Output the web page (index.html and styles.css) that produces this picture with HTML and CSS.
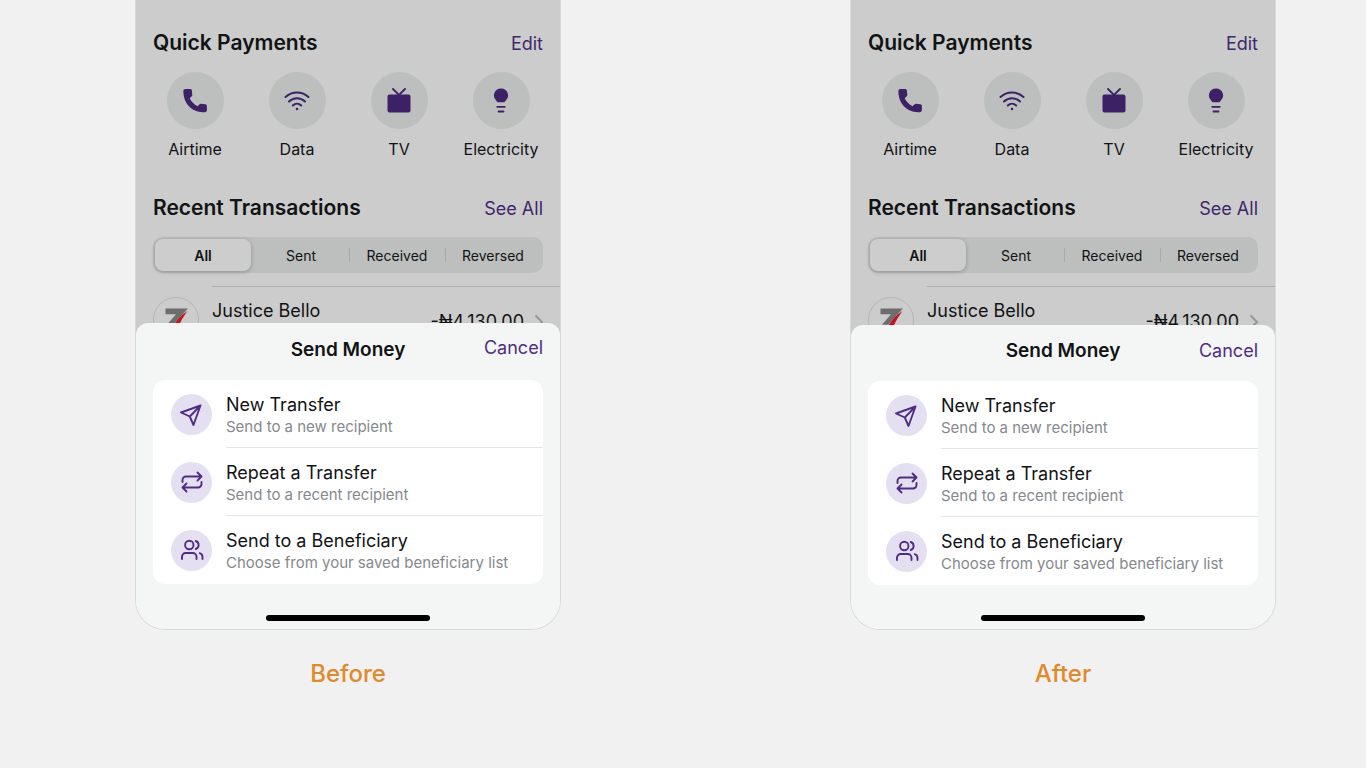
FILE: index.html
```
<!DOCTYPE html>
<html lang="en">
<head>
  <meta charset="UTF-8">
  <meta name="viewport" content="width=device-width, initial-scale=1">
  <title>Send Money - Before / After</title>
  <link rel="stylesheet" href="styles.css">
</head>
<body>
  <!-- shared icons -->
  <svg class="sprite" aria-hidden="true">
    <symbol id="phone" viewBox="0 0 24 24">
      <path fill="currentColor" d="M2.500 0h4.500c1.200 0 1.800.7 1.900 1.700l.4 4c.1.800-.2 1.400-.8 1.900L6.700 9.200c1.600 3.300 4.300 6.300 7.900 8l1.700-1.800c.5-.5 1.200-.8 1.900-.7l4 .5c1.100.1 1.700.8 1.700 1.900v4c0 1.300-.8 2-2.100 2.100C9.500 24.300 0 14.300.4 2.100.4.900 1.200 0 2.500 0z"/>
    </symbol>
    <symbol id="wifi" viewBox="0 0 26 22">
      <g fill="none" stroke="currentColor" stroke-width="2" stroke-linecap="round">
        <path d="M1.500 7C8 1 18 1 24.500 7M5 11.500c4.600-4.500 11.400-4.500 16 0M8.800 15.500c2.500-2.400 5.900-2.400 8.400 0"/>
      </g>
      <circle cx="13" cy="19" r="1.300" fill="currentColor"/>
    </symbol>
    <symbol id="tv" viewBox="0 0 24 26">
      <rect x="0.500" y="6.500" width="23" height="18" rx="2" fill="currentColor"/>
      <path d="M6 1l6 6 6-6" fill="none" stroke="currentColor" stroke-width="1.800" stroke-linecap="round"/>
    </symbol>
    <symbol id="bulb" viewBox="0 0 16 26">
      <path fill="currentColor" d="M8 .5a7 7 0 0 1 4.500 12.400c-.6.500-.9 1-1 1.400h-7c-.1-.4-.4-.9-1-1.400A7 7 0 0 1 8 .5z"/>
      <path d="M4.200 18.800h7.600M5.500 23.500h5" stroke="currentColor" stroke-width="1.800" stroke-linecap="round"/>
    </symbol>
    <symbol id="plane" viewBox="0 0 24 24">
      <path d="M20.500 3.500L1 10.500l8.800 4L13.500 23zM20.500 3.500L9.800 14.500" fill="none" stroke="currentColor" stroke-width="1.900" stroke-linejoin="round"/>
    </symbol>
    <symbol id="repeat" viewBox="0 0 24 24">
      <path d="M17.500 2.500L21.500 6.500l-4 4M2.500 12v-2A3.500 3.500 0 0 1 6 6.500h15.500M6.500 21.500l-4-4 4-4M21.500 12v2a3.500 3.500 0 0 1-3.500 3.500H2.500" fill="none" stroke="currentColor" stroke-width="1.900" stroke-linecap="round" stroke-linejoin="round"/>
    </symbol>
    <symbol id="users" viewBox="0 0 24 24">
      <path d="M16.500 21v-2.300a3.700 3.700 0 0 0-3.700-3.700H5.700A3.700 3.700 0 0 0 2 18.700V21M22.500 21v-2.300a3.900 3.900 0 0 0-2.800-3.600M15.700 3a4.200 4.200 0 0 1 0 8" fill="none" stroke="currentColor" stroke-width="1.900" stroke-linecap="round"/>
      <circle cx="9.300" cy="7" r="4.200" fill="none" stroke="currentColor" stroke-width="1.900"/>
    </symbol>
    <symbol id="zenith" viewBox="0 0 46 46">
      <path fill="#6d6d6d" d="M12 11h23.500L20 28h-6.500l9.500-11H12z"/>
      <path fill="#c4161c" d="M35 13.500C28 18 24 23 18.500 31H25c3-7 6-12 10-17.500z"/>
    </symbol>
  </svg>

  <main class="comparison">
    <figure class="version before">
      <div class="phone">
        <section class="app">
          <header class="section-head">
            <h2>Quick Payments</h2>
            <button class="link">Edit</button>
          </header>
          <div class="payments">
            <button class="payment"><span class="payment-icon"><svg width="24" height="24"><use href="#phone"/></svg></span>Airtime</button>
            <button class="payment"><span class="payment-icon"><svg width="26" height="22"><use href="#wifi"/></svg></span>Data</button>
            <button class="payment"><span class="payment-icon"><svg width="24" height="26"><use href="#tv"/></svg></span>TV</button>
            <button class="payment"><span class="payment-icon"><svg width="16" height="26"><use href="#bulb"/></svg></span>Electricity</button>
          </div>
          <header class="section-head">
            <h2>Recent Transactions</h2>
            <button class="link">See All</button>
          </header>
          <div class="tabs">
            <button class="tab active">All</button>
            <button class="tab">Sent</button>
            <button class="tab">Received</button>
            <button class="tab">Reversed</button>
          </div>
          <div class="transaction">
            <svg class="bank"><use href="#zenith"/></svg>
            <div class="transaction-body">
              <span class="name">Justice Bello</span>
              <span class="amount">-₦4,130.00</span>
              <svg class="chevron" width="10" height="16" viewBox="0 0 10 16"><path d="M1.500 1.500L8 8l-6.500 6.500"/></svg>
            </div>
          </div>
        </section>
        <section class="sheet">
          <header class="sheet-head">
            <h3>Send Money</h3>
            <button class="link">Cancel</button>
          </header>
          <div class="options">
            <button class="option">
              <span class="option-icon"><svg><use href="#plane"/></svg></span>
              <span class="option-text"><b>New Transfer</b><small>Send to a new recipient</small></span>
            </button>
            <button class="option">
              <span class="option-icon"><svg><use href="#repeat"/></svg></span>
              <span class="option-text"><b>Repeat a Transfer</b><small>Send to a recent recipient</small></span>
            </button>
            <button class="option">
              <span class="option-icon"><svg><use href="#users"/></svg></span>
              <span class="option-text"><b>Send to a Beneficiary</b><small>Choose from your saved beneficiary list</small></span>
            </button>
          </div>
          <div class="home-bar"></div>
        </section>
      </div>
      <figcaption>Before</figcaption>
    </figure>

    <figure class="version after">
      <div class="phone">
        <section class="app">
          <header class="section-head">
            <h2>Quick Payments</h2>
            <button class="link">Edit</button>
          </header>
          <div class="payments">
            <button class="payment"><span class="payment-icon"><svg width="24" height="24"><use href="#phone"/></svg></span>Airtime</button>
            <button class="payment"><span class="payment-icon"><svg width="26" height="22"><use href="#wifi"/></svg></span>Data</button>
            <button class="payment"><span class="payment-icon"><svg width="24" height="26"><use href="#tv"/></svg></span>TV</button>
            <button class="payment"><span class="payment-icon"><svg width="16" height="26"><use href="#bulb"/></svg></span>Electricity</button>
          </div>
          <header class="section-head">
            <h2>Recent Transactions</h2>
            <button class="link">See All</button>
          </header>
          <div class="tabs">
            <button class="tab active">All</button>
            <button class="tab">Sent</button>
            <button class="tab">Received</button>
            <button class="tab">Reversed</button>
          </div>
          <div class="transaction">
            <svg class="bank"><use href="#zenith"/></svg>
            <div class="transaction-body">
              <span class="name">Justice Bello</span>
              <span class="amount">-₦4,130.00</span>
              <svg class="chevron" width="10" height="16" viewBox="0 0 10 16"><path d="M1.500 1.500L8 8l-6.500 6.500"/></svg>
            </div>
          </div>
        </section>
        <section class="sheet">
          <header class="sheet-head">
            <h3>Send Money</h3>
            <button class="link">Cancel</button>
          </header>
          <div class="options">
            <button class="option">
              <span class="option-icon"><svg><use href="#plane"/></svg></span>
              <span class="option-text"><b>New Transfer</b><small>Send to a new recipient</small></span>
            </button>
            <button class="option">
              <span class="option-icon"><svg><use href="#repeat"/></svg></span>
              <span class="option-text"><b>Repeat a Transfer</b><small>Send to a recent recipient</small></span>
            </button>
            <button class="option">
              <span class="option-icon"><svg><use href="#users"/></svg></span>
              <span class="option-text"><b>Send to a Beneficiary</b><small>Choose from your saved beneficiary list</small></span>
            </button>
          </div>
          <div class="home-bar"></div>
        </section>
      </div>
      <figcaption>After</figcaption>
    </figure>
  </main>
</body>
</html>
```
FILE: styles.css
```
* {
  box-sizing: border-box;
}
body {
  margin: 0;
  background: #f1f1f1;
  color: #111315;
  font-family: Inter, "Liberation Sans", sans-serif;
}
h2, h3, figure {
  margin: 0;
}
button {
  padding: 0;
  border: 0;
  background: none;
  color: inherit;
  font: inherit;
  cursor: pointer;
}
.sprite {
  display: none;
}
.comparison {
  display: flex;
  justify-content: space-between;
  gap: 24px;
  padding: 0 90px 0 135px;
}
.version {
  flex: 0 1 426px;
}
.phone {
  overflow: hidden;
  background: #f4f6f5;
  border: 1px solid #d9dadf;
  border-top: 0;
  border-radius: 0 0 30px 30px;
}
figcaption {
  margin-top: 30px;
  color: #e08a2e;
  font-size: 24px;
  font-weight: 500;
  line-height: 28px;
  text-align: center;
}

/* dimmed home screen */
.app {
  background: #ccc;
  padding-top: 28px;
}
.section-head {
  display: flex;
  justify-content: space-between;
  align-items: baseline;
  height: 30px;
  padding: 0 17px;
}
h2 {
  font-size: 21px;
  font-weight: 600;
  line-height: 30px;
}
.link {
  color: #4f2d84;
  font-size: 18px;
  line-height: 30px;
}
.app .link {
  color: #40276c;
}
.payments {
  display: grid;
  grid-template-columns: repeat(4, 1fr);
  padding: 14px 8px 33px;
}
.payment {
  display: flex;
  flex-direction: column;
  align-items: center;
  gap: 9px;
  font-size: 16px;
  line-height: 22px;
}
.payment-icon {
  display: flex;
  align-items: center;
  justify-content: center;
  width: 57px;
  height: 57px;
  border-radius: 50%;
  background: #bcbfbe;
  color: #3c2166;
}
.tabs {
  display: flex;
  height: 36px;
  margin: 14px 17px 13px;
  padding: 2px;
  border-radius: 10px;
  background: #bcbfbe;
}
.tab {
  flex: 1;
  position: relative;
  font-size: 14px;
}
.tab.active {
  margin-right: 2px;
  border-radius: 8px;
  background: #cdcdcd;
  box-shadow: 0 1px 4px rgba(0,0,0,0.25);
  font-weight: 600;
}
.tab + .tab + .tab::before {
  content: "";
  position: absolute;
  left: 0;
  top: 9px;
  width: 1px;
  height: 14px;
  background: #a7aaa9;
}
.transaction {
  display: flex;
  gap: 13px;
  padding-left: 17px;
}
.bank {
  width: 46px;
  height: 46px;
  margin-top: 11px;
  border: 1px solid #b5b5b5;
  border-radius: 50%;
}
.transaction-body {
  flex: 1;
  display: flex;
  align-items: center;
  height: 70px;
  padding-right: 16px;
  border-top: 1px solid #afb0b0;
}
.name {
  flex: 1;
  align-self: flex-start;
  margin-top: 12px;
  font-size: 18px;
  line-height: 24px;
}
.amount {
  font-size: 18px;
}
.chevron {
  margin-left: 10px;
  fill: none;
  stroke: #969696;
  stroke-width: 2;
}

/* bottom sheet */
.sheet {
  position: relative;
  margin-top: -33px;
  padding: 0 17px 8px;
  border-radius: 12px 12px 0 0;
  background: #f4f6f5;
}
.after .sheet {
  margin-top: -31px;
}
.sheet-head {
  display: grid;
  grid-template-columns: 1fr auto 1fr;
  align-items: center;
  height: 56px;
  padding-bottom: 4px;
}
.sheet-head h3 {
  grid-column: 2;
  font-size: 19px;
  font-weight: 600;
  line-height: 30px;
}
.sheet-head .link {
  justify-self: end;
}
.before .sheet-head {
  height: 57px;
}
.before .sheet-head .link {
  padding-bottom: 3px;
}
.options {
  border-radius: 12px;
  background: #fff;
}
.option {
  display: flex;
  align-items: center;
  gap: 14px;
  width: 100%;
  padding-left: 18px;
  text-align: left;
}
.option-icon {
  display: flex;
  align-items: center;
  justify-content: center;
  width: 41px;
  height: 41px;
  border-radius: 50%;
  background: #e5e0f1;
  color: #4f2d84;
}
.option-icon svg {
  width: 24px;
  height: 24px;
}
.option-text {
  flex: 1;
  padding: 13px 0 10px;
  border-bottom: 1px solid #e4e5e6;
}
.option:last-child .option-text {
  border-color: transparent;
}
.option b,
.option small {
  display: block;
}
.option b {
  font-size: 18px;
  font-weight: 400;
  line-height: 24px;
}
.option small {
  color: #85898d;
  font-size: 15px;
  line-height: 20px;
}
.home-bar {
  width: 164px;
  height: 6px;
  margin: 31px auto 0;
  border-radius: 3px;
  background: #000;
}
.after .home-bar {
  margin-top: 30px;
}
```
